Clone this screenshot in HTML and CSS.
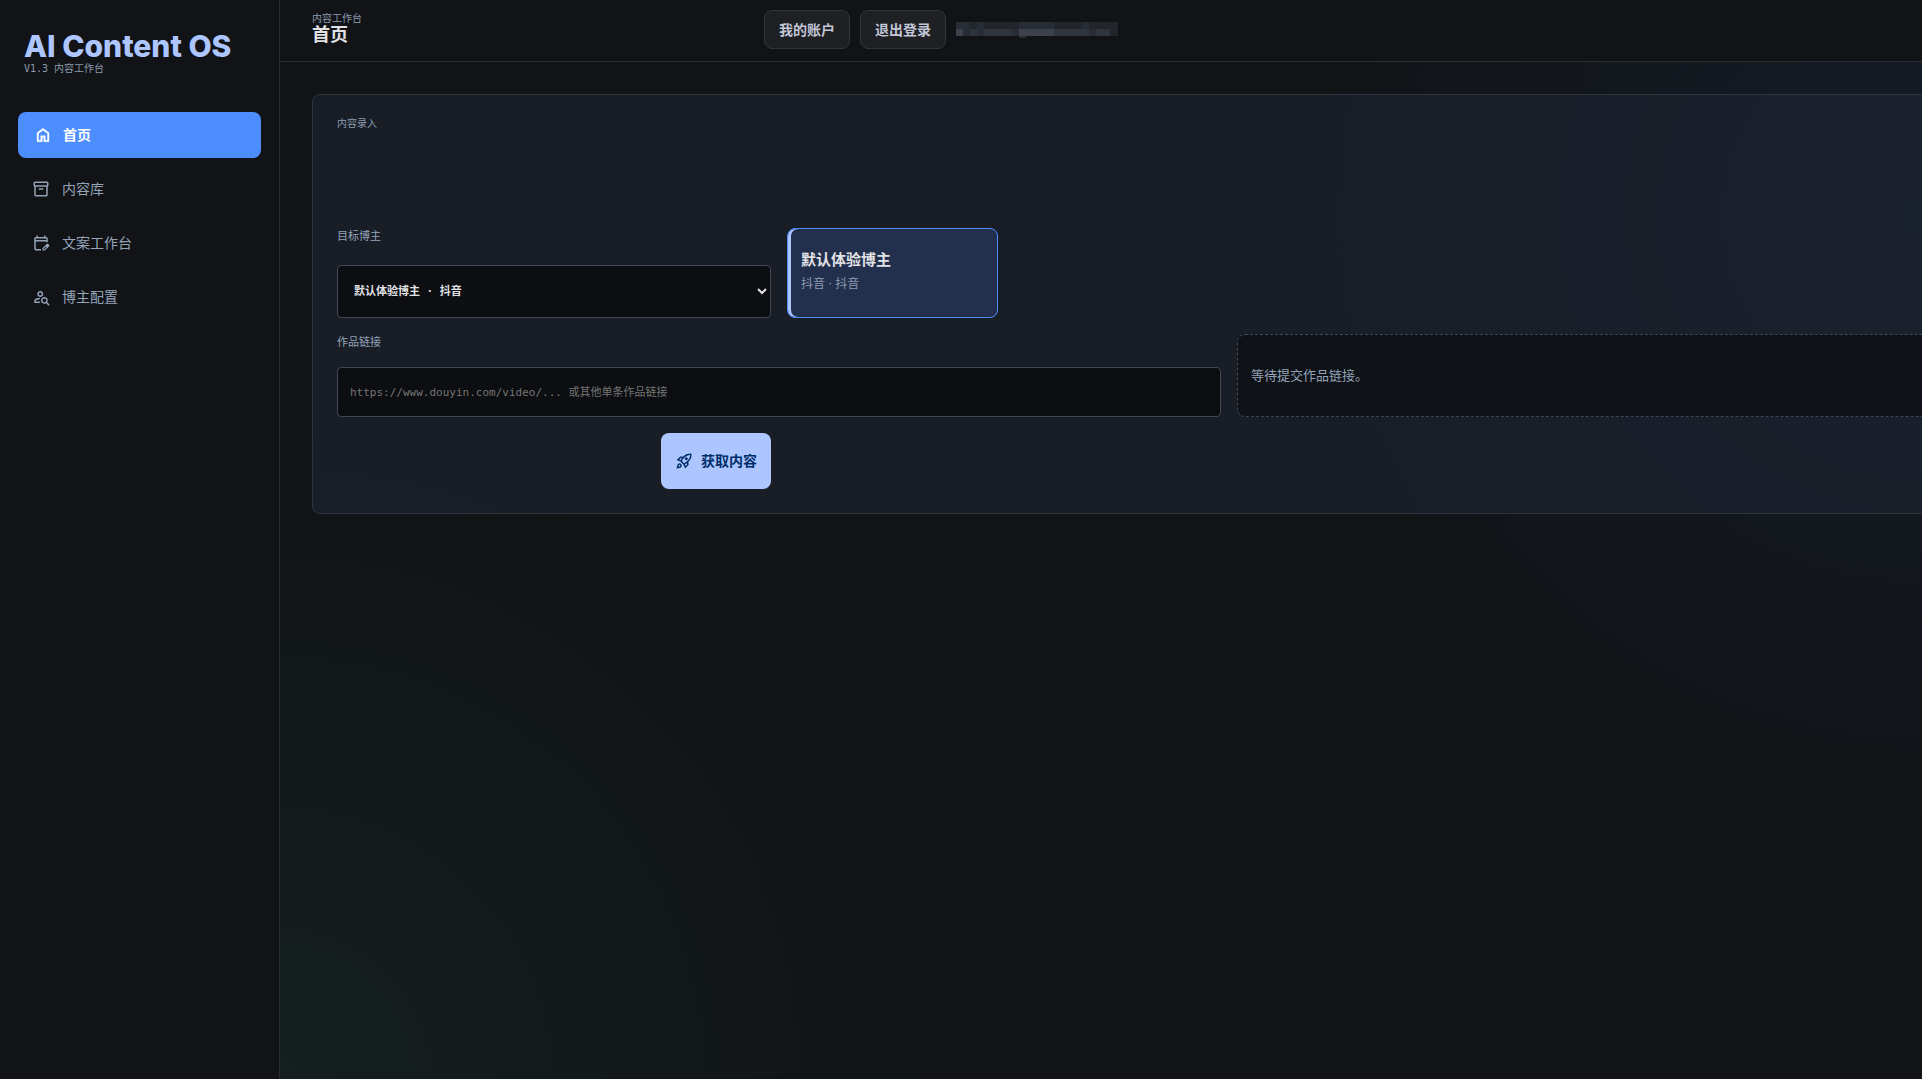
FILE: index.html
```html
<!DOCTYPE html>
<html lang="zh-CN">
<head>
    <meta charset="UTF-8">
    <meta name="viewport" content="width=device-width, initial-scale=1.0">
    <title>AI Content OS</title>
    <link rel="stylesheet" href="styles.css">
</head>
<body>
    <aside class="sidebar">
        <div class="brand">
            <h1>AI Content OS</h1>
            <p class="mono">V1.3 内容工作台</p>
        </div>
        <nav>
            <a href="#" class="active">
                <svg class="icon" viewBox="0 0 24 24"><path stroke="currentColor" stroke-width="0.5" d="M6 19h3v-6h6v6h3v-9l-6-4.500L6 10v9zm-2 2V9l8-6 8 6v12h-7v-6h-2v6H4z"/></svg>
                <span>首页</span>
            </a>
            <a href="#">
                <svg class="icon" viewBox="0 -960 960 960"><path d="M200-80q-33 0-56.500-23.500T120-160v-451q-18-11-29-28.500T80-680v-120q0-33 23.500-56.500T160-880h640q33 0 56.500 23.500T880-800v120q0 23-11 40.500T840-611v451q0 33-23.500 56.500T760-80H200Zm0-520v440h560v-440H200Zm-40-80h640v-120H160v120Zm200 240h240v-80H360v80Z"/></svg>
                <span>内容库</span>
            </a>
            <a href="#">
                <svg class="icon" viewBox="0 -960 960 960"><path d="M200-80q-33 0-56.500-23.500T120-160v-560q0-33 23.500-56.500T200-800h40v-80h80v80h320v-80h80v80h40q33 0 56.500 23.500T840-720v200h-80v-40H200v400h280v80H200Zm0-560h560v-80H200v80ZM560-80v-123l221-220q9-9 20-13t22-4q12 0 23 4.500t20 13.500l37 37q8 9 12.500 20t4.500 22q0 11-4 22.500T903-300L683-80H560ZM620-140h38l121-122-18-19-19-18-122 121v38Z"/></svg>
                <span>文案工作台</span>
            </a>
            <a href="#">
                <svg class="icon" viewBox="0 -960 960 960"><path d="M440-480q-66 0-113-47t-47-113q0-66 47-113t113-47q66 0 113 47t47 113q0 66-47 113t-113 47Zm0-80q33 0 56.500-23.500T520-640q0-33-23.500-56.500T440-720q-33 0-56.500 23.500T360-640q0 33 23.500 56.500T440-560ZM884-20 756-148q-21 12-45 20t-51 8q-75 0-127.500-52.500T480-300q0-75 52.500-127.500T660-480q75 0 127.500 52.500T840-300q0 27-8 51t-20 45L940-76l-56 56ZM660-200q42 0 71-29t29-71q0-42-29-71t-71-29q-42 0-71 29t-29 71q0 42 29 71t71 29Zm-540 40v-111q0-34 17-63t47-44q51-26 115-44t142-18q-12 18-20.500 38.500T407-359q-60 5-107 20.500T221-306q-10 5-15.500 14.500T200-271v31h207q5 22 13.500 42t20.500 38H120Z"/></svg>
                <span>博主配置</span>
            </a>
        </nav>
    </aside>

    <div class="main">
        <header class="topbar">
            <div class="page-title">
                <p class="mono">内容工作台</p>
                <h2>首页</h2>
            </div>
            <div class="account">
                <button type="button">我的账户</button>
                <button type="button">退出登录</button>
                <!-- account name, masked -->
                <svg class="masked" viewBox="0 0 162 16" shape-rendering="crispEdges">
                    <path fill="#22252b" d="M0 0h162v14H0z"/>
                    <path fill="#282c35" d="M0 0h14v7H0zM21 0h7v7h-7zM63 0h35v7H63zM126 0h7v7h-7zM7 7h7v7H7zM21 7h7v7h-7zM56 7h7v7h-7zM133 7h7v7h-7zM63 14h7v2h-7z"/>
                    <path fill="#2f353d" d="M14 7h7v7h-7zM28 7h28v7H28zM98 7h35v7H98zM140 7h14v7h-14z"/>
                    <path fill="#3c414c" d="M0 7h7v7H0zM63 7h35v7H63z"/>
                </svg>
            </div>
        </header>

        <main>
            <form class="panel">
                <p class="panel-title mono">内容录入</p>

                <div class="field">
                    <label for="blogger">目标博主</label>
                    <select id="blogger">
                        <option>默认体验博主 · 抖音</option>
                    </select>
                </div>
                <div class="blogger-card">
                    <strong>默认体验博主</strong>
                    <span>抖音 · 抖音</span>
                </div>

                <div class="field field-link">
                    <label for="link">作品链接</label>
                    <input type="text" id="link" placeholder="https://www.douyin.com/video/... 或其他单条作品链接">
                </div>
                <div class="status">等待提交作品链接。</div>

                <button type="button" class="submit">
                    <svg class="icon" viewBox="0 -960 960 960"><path d="m226-559 78 33q14-28 29-54t33-52l-56-11-84 84Zm142 83 114 113q42-16 90-49t90-75q70-70 109.500-155.500T806-800q-72-5-158 34.500T492-656q-42 42-75 90t-49 90Zm178-65q-23-23-23-56.500t23-56.500q23-23 57-23t57 23q23 23 23 56.500T660-541q-23 23-57 23t-57-23Zm19 321 84-84-11-56q-26 18-52 32.500T532-299l33 79Zm313-653q19 121-23.500 235.500T708-419l20 99q4 20-2 39t-20 33L538-80l-84-197-171-171-197-84 167-168q14-14 33.500-20t39.500-2l99 20q104-104 218-147t235-24ZM157-321q35-35 85.500-35.500T328-322q35 35 34.500 85.500T327-151q-25 25-83.500 43T82-76q14-103 32-161.500t43-83.500Zm57 56q-10 10-20 36.500T180-175q27-4 53.500-13.500T270-208q12-12 13-29t-11-29q-12-12-29-11.500T214-265Z"/></svg>
                    <span>获取内容</span>
                </button>
            </form>
        </main>
    </div>
</body>
</html>
```

FILE: styles.css
```css
* {
    box-sizing: border-box;
}

body {
    margin: 0;
    min-height: 100vh;
    display: grid;
    grid-template-columns: 280px minmax(0, 1fr);
    overflow-x: hidden;
    background: #111316;
    color: #e2e2e6;
    font-family: Inter, "Noto Sans CJK SC", sans-serif;
    font-size: 14px;
}

h1, h2, p {
    margin: 0;
}

button, select, input {
    font: inherit;
}

.mono {
    font-family: "DejaVu Sans Mono", "Noto Sans CJK SC", monospace;
    font-size: 10px;
    line-height: 14px;
    color: #8c9bb0;
}

.icon {
    width: 18px;
    height: 18px;
    flex: none;
    fill: currentColor;
}

/* Sidebar */
.sidebar {
    border-right: 1px solid #2a2c30;
    padding: 30px 16px;
}

.brand {
    padding: 0 8px;
    margin-bottom: 36px;
}

.brand h1 {
    font-size: 30px;
    font-weight: 800;
    line-height: 32px;
    color: #adc6ff;
}

nav {
    display: flex;
    flex-direction: column;
    gap: 8px;
}

nav a {
    display: flex;
    align-items: center;
    gap: 12px;
    height: 46px;
    padding: 0 16px;
    border-radius: 8px;
    color: #94a3b8;
    text-decoration: none;
}

nav a span,
.submit span {
    padding-bottom: 2px;
}

nav a.active {
    margin: 0 2px;
    gap: 11px;
    background: #4d8eff;
    color: #fff;
    font-weight: 700;
}

/* Main area */
.main {
    overflow: hidden;
    background:
        radial-gradient(circle at 100% 20%, rgba(77, 142, 255, 0.08), transparent 620px),
        radial-gradient(circle at 0 100%, rgba(78, 222, 190, 0.06), transparent 660px);
}

.topbar {
    display: grid;
    grid-template-columns: 452px auto;
    align-items: center;
    justify-content: start;
    height: 62px;
    padding: 0 32px 2px;
    border-bottom: 1px solid #2a2c30;
    background: #111316;
}

.page-title {
    padding-bottom: 4px;
}

.page-title h2 {
    font-size: 18px;
    line-height: 18px;
}

.account {
    display: flex;
    align-items: center;
    gap: 10px;
}

.account button {
    height: 39px;
    padding: 0 14px 2px;
    border: 1px solid #323438;
    border-radius: 8px;
    background: #1e2024;
    color: #c2c6d6;
    font-weight: 700;
}

.masked {
    width: 162px;
    height: 16px;
}

main {
    padding: 32px;
}

/* The panel keeps its column widths and runs past the window edge */
.panel {
    display: grid;
    grid-template-columns: repeat(4, minmax(434px, 1fr));
    grid-template-rows: 93px auto auto auto;
    gap: 16px;
    width: max-content;
    min-width: 100%;
    padding: 24px;
    border: 1px solid #30343d;
    border-radius: 8px;
    background: rgba(30, 36, 50, 0.6);
}

.panel-title {
    grid-column: 1 / -1;
    line-height: 10px;
}

.field {
    grid-column: 1;
    display: flex;
    flex-direction: column;
    justify-content: space-between;
    font-family: "DejaVu Sans Mono", "Noto Sans CJK SC", monospace;
    font-size: 11px;
}

.field-link {
    grid-column: 1 / 3;
    gap: 15px;
}

.field label {
    line-height: 18px;
    color: #94a3b8;
}

.field select,
.field input {
    width: 100%;
    border: 1px solid #424754;
    border-radius: 4px;
    background: #0c0e11;
    color: #e2e2e6;
}

.field select {
    height: 53px;
    padding: 0 12px;
    font-weight: 700;
}

.field input {
    height: 50px;
    padding: 0 12px;
}

.field input::placeholder {
    color: #757575;
}

.blogger-card {
    justify-self: start;
    width: 211px;
    height: 90px;
    display: flex;
    flex-direction: column;
    justify-content: center;
    padding: 0 13px 4px;
    border: 1px solid #4d8eff;
    border-radius: 8px;
    background: #22304d;
    box-shadow: inset 3px 0 #adc6ff;
}

.blogger-card strong {
    font-size: 15px;
    line-height: 26px;
}

.blogger-card span {
    font-size: 12px;
    line-height: 22px;
    color: #8c9bb0;
}

.status {
    grid-column: 3 / 5;
    display: flex;
    align-items: center;
    padding: 0 13px 2px;
    border: 1px dashed #424754;
    border-radius: 8px;
    background: rgba(12, 14, 17, 0.7);
    color: #94a3b8;
    font-size: 13px;
}

.submit {
    grid-column: 1;
    justify-self: end;
    display: flex;
    align-items: center;
    gap: 8px;
    height: 56px;
    padding: 0 14px;
    border: 0;
    border-radius: 8px;
    background: #adc6ff;
    color: #002e6a;
    font-weight: 700;
}
```
